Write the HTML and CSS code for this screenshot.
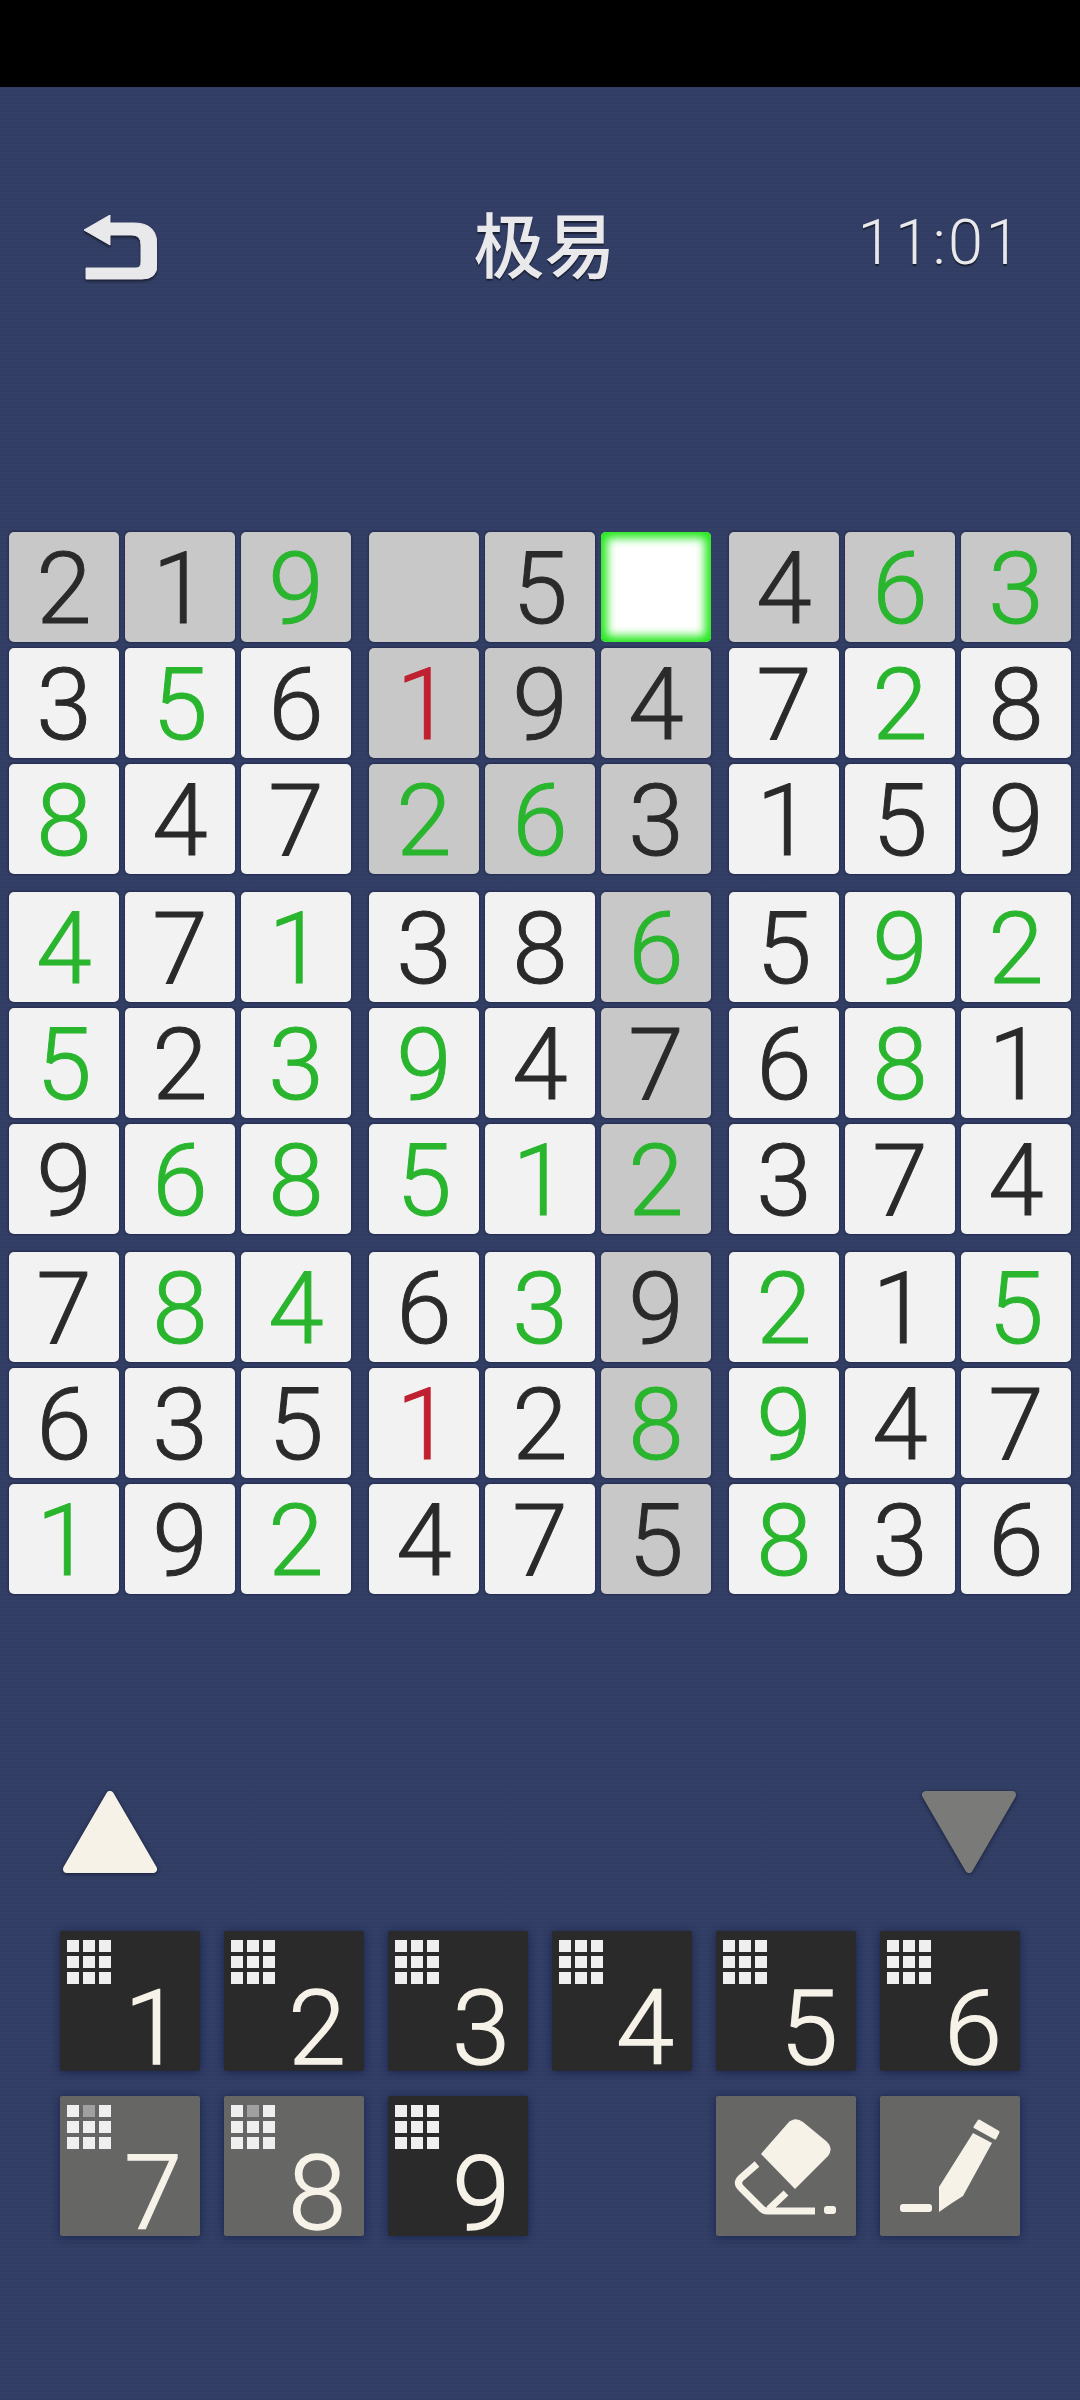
FILE: index.html
```html
<!DOCTYPE html>
<html lang="zh">
<head>
<meta charset="UTF-8">
<title>极易</title>
<link rel="stylesheet" href="styles.css">
</head>
<body>
<div class="status"></div>
<div class="game">
    <div class="header">
        <svg class="back" width="73" height="65" viewBox="0 0 73 65"><path d="M0 15 L26 0 V8 H50 Q73 8 73 30 V50 Q73 64 58 64 H2 V53 H52 Q57 53 57 47 V30 Q57 20 48 20 H26 V30 Z"/></svg>
        <div class="title">极易</div>
        <div class="time">11:01</div>
    </div>

    <div class="board">
        <div class="box">
            <div class="cell dim">2</div><div class="cell dim">1</div><div class="cell dim g">9</div>
            <div class="cell">3</div><div class="cell g">5</div><div class="cell">6</div>
            <div class="cell g">8</div><div class="cell">4</div><div class="cell">7</div>
        </div>
        <div class="box">
            <div class="cell dim"></div><div class="cell dim">5</div><div class="cell sel"></div>
            <div class="cell dim r">1</div><div class="cell dim">9</div><div class="cell dim">4</div>
            <div class="cell dim g">2</div><div class="cell dim g">6</div><div class="cell dim">3</div>
        </div>
        <div class="box">
            <div class="cell dim">4</div><div class="cell dim g">6</div><div class="cell dim g">3</div>
            <div class="cell">7</div><div class="cell g">2</div><div class="cell">8</div>
            <div class="cell">1</div><div class="cell">5</div><div class="cell">9</div>
        </div>
        <div class="box">
            <div class="cell g">4</div><div class="cell">7</div><div class="cell g">1</div>
            <div class="cell g">5</div><div class="cell">2</div><div class="cell g">3</div>
            <div class="cell">9</div><div class="cell g">6</div><div class="cell g">8</div>
        </div>
        <div class="box">
            <div class="cell">3</div><div class="cell">8</div><div class="cell dim g">6</div>
            <div class="cell g">9</div><div class="cell">4</div><div class="cell dim">7</div>
            <div class="cell g">5</div><div class="cell g">1</div><div class="cell dim g">2</div>
        </div>
        <div class="box">
            <div class="cell">5</div><div class="cell g">9</div><div class="cell g">2</div>
            <div class="cell">6</div><div class="cell g">8</div><div class="cell">1</div>
            <div class="cell">3</div><div class="cell">7</div><div class="cell">4</div>
        </div>
        <div class="box">
            <div class="cell">7</div><div class="cell g">8</div><div class="cell g">4</div>
            <div class="cell">6</div><div class="cell">3</div><div class="cell">5</div>
            <div class="cell g">1</div><div class="cell">9</div><div class="cell g">2</div>
        </div>
        <div class="box">
            <div class="cell">6</div><div class="cell g">3</div><div class="cell dim">9</div>
            <div class="cell r">1</div><div class="cell">2</div><div class="cell dim g">8</div>
            <div class="cell">4</div><div class="cell">7</div><div class="cell dim">5</div>
        </div>
        <div class="box">
            <div class="cell g">2</div><div class="cell">1</div><div class="cell g">5</div>
            <div class="cell g">9</div><div class="cell">4</div><div class="cell">7</div>
            <div class="cell g">8</div><div class="cell">3</div><div class="cell">6</div>
        </div>
    </div>

    <div class="arrows">
        <svg class="tri" width="94" height="82" viewBox="0 0 94 82"><path class="up" d="M47 4 L90 78 H4 Z"/></svg>
        <svg class="tri" width="94" height="82" viewBox="0 0 94 82"><path class="down" d="M4 4 H90 L47 78 Z"/></svg>
    </div>

    <div class="pad">
        <div class="key"><div class="mini"><i></i><i></i><i></i><i></i><i></i><i></i><i></i><i></i><i></i></div><div class="num">1</div></div>
        <div class="key"><div class="mini"><i></i><i></i><i></i><i></i><i></i><i></i><i></i><i></i><i></i></div><div class="num">2</div></div>
        <div class="key"><div class="mini"><i></i><i></i><i></i><i></i><i></i><i></i><i></i><i></i><i></i></div><div class="num">3</div></div>
        <div class="key"><div class="mini"><i></i><i></i><i></i><i></i><i></i><i></i><i></i><i></i><i></i></div><div class="num">4</div></div>
        <div class="key"><div class="mini"><i></i><i></i><i></i><i></i><i></i><i></i><i></i><i></i><i></i></div><div class="num">5</div></div>
        <div class="key"><div class="mini"><i></i><i></i><i></i><i></i><i></i><i></i><i></i><i></i><i></i></div><div class="num">6</div></div>
        <div class="key off"><div class="mini"><i></i><i class="faded"></i><i></i><i></i><i></i><i></i><i></i><i></i><i></i></div><div class="num">7</div></div>
        <div class="key off"><div class="mini"><i></i><i class="faded"></i><i></i><i></i><i></i><i></i><i></i><i></i><i></i></div><div class="num">8</div></div>
        <div class="key"><div class="mini"><i></i><i></i><i></i><i></i><i></i><i></i><i></i><i></i><i></i></div><div class="num">9</div></div>
        <div class="spacer"></div>
        <div class="key off tool">
            <svg width="140" height="140" viewBox="0 0 140 140">
                <path class="ink" d="M45 58 L72 27 Q79 20 87 26 L110 45 Q118 52 112 60 L79 93 Z"/>
                <path class="line" d="M41 68 L25 82 Q20 87 25 92 L46 113 Q48 115 52 115 H99 M70 97 L53 113"/>
                <rect class="ink" x="108" y="110" width="12" height="8" rx="3"/>
            </svg>
        </div>
        <div class="key off tool">
            <svg width="140" height="140" viewBox="0 0 140 140">
                <path class="ink" d="M93 37 L112 47 L83 100 L72 107 L59 116 V91 Z"/>
                <path class="ink soft" d="M99 25 L118 36 L115 42 L95 31 Z"/>
                <rect class="ink" x="20" y="108" width="32" height="8" rx="3"/>
            </svg>
        </div>
    </div>
</div>
</body>
</html>
```

FILE: styles.css
```css
body {
    margin: 0;
    height: 2400px;
    overflow: hidden;
    background-color: #333f66;
    background-image: repeating-linear-gradient(0deg, rgba(0,0,0,0.03) 0 2px, transparent 2px 4px);
    font-family: Roboto, "Noto Sans CJK SC", sans-serif;
}

.status {
    height: 87px;
    background-color: #000;
}

.game {
    display: flex;
    flex-direction: column;
}

.header {
    display: grid;
    grid-template-columns: 1fr auto 1fr;
    align-items: center;
    height: 66px;
    margin-top: 127px;
    padding: 0 57px 0 84px;
    color: #e9e9ec;
    text-shadow: 0 2px 1px rgba(0,0,0,0.5);
}

.back {
    fill: #e9e9ec;
    stroke: #e9e9ec;
    stroke-width: 1;
    stroke-linejoin: round;
    filter: drop-shadow(0 2px 1px rgba(0,0,0,0.5));
}

.title {
    margin: -12px 0 0 -18px;
    font-family: "Noto Sans CJK SC", sans-serif;
    font-size: 71px;
    font-weight: 500;
    line-height: 66px;
}

.time {
    justify-self: end;
    margin-top: -8px;
    font-size: 63px;
    font-weight: 300;
    letter-spacing: 2.5px;
    line-height: 66px;
}

.board {
    display: grid;
    grid-template-columns: repeat(3, 342px);
    gap: 18px;
    margin: 252px 0 0 9px;
}

.box {
    display: grid;
    grid-template-columns: repeat(3, 110px);
    grid-auto-rows: 110px;
    gap: 6px;
}

.cell {
    display: flex;
    justify-content: center;
    align-items: center;
    box-sizing: border-box;
    padding-top: 3px;
    background-color: #f2f2f2;
    border-radius: 5px;
    box-shadow: 0 0 3px rgba(15,20,45,0.8);
    color: #2a2a2a;
    font-size: 100px;
    font-weight: 300;
    line-height: 107px;
    -webkit-text-stroke: 1px;
}

.dim {
    background-color: #c8c8c8;
}

.g {
    color: #2ab52e;
}

.r {
    color: #c0202f;
}

.sel {
    background-color: #fff;
    box-shadow: inset 0 0 10px 6px #22e81a;
}

.arrows {
    display: flex;
    justify-content: space-between;
    margin: 197px 0 0;
    padding: 0 64px 0 63px;
}

.tri {
    filter: drop-shadow(0 1px 2px rgba(15,20,45,0.8));
}

.tri path {
    stroke-width: 8;
    stroke-linejoin: round;
}

.up {
    fill: #f6f2e8;
    stroke: #f6f2e8;
}

.down {
    fill: #7a7a78;
    stroke: #7a7a78;
}

.pad {
    display: grid;
    grid-template-columns: repeat(6, 140px);
    grid-auto-rows: 140px;
    gap: 25px 24px;
    margin: 58px 0 0 60px;
}

.key {
    box-sizing: border-box;
    padding: 9px 7px;
    background-color: #2a2a2a;
    border-radius: 2px;
    box-shadow: 0 1px 8px rgba(20,30,75,0.85);
    color: #f6f2e8;
}

.key.off {
    background-color: #666664;
}

.key.tool {
    padding: 0;
}

.mini {
    display: grid;
    grid-template-columns: repeat(3, 12px);
    grid-auto-rows: 12px;
    gap: 4px;
}

.mini i {
    background-color: #efefef;
}

.mini i.faded {
    background-color: #a0a0a0;
}

.num {
    width: 128px;
    padding-left: 44px;
    box-sizing: border-box;
    text-align: center;
    font-size: 104px;
    font-weight: 300;
    line-height: 90px;
    -webkit-text-stroke: 1.5px;
}

.ink {
    fill: #f6f2e8;
}

.soft {
    stroke: #f6f2e8;
    stroke-width: 3;
    stroke-linejoin: round;
}

.line {
    fill: none;
    stroke: #f6f2e8;
    stroke-width: 7;
    stroke-linejoin: round;
}
```
